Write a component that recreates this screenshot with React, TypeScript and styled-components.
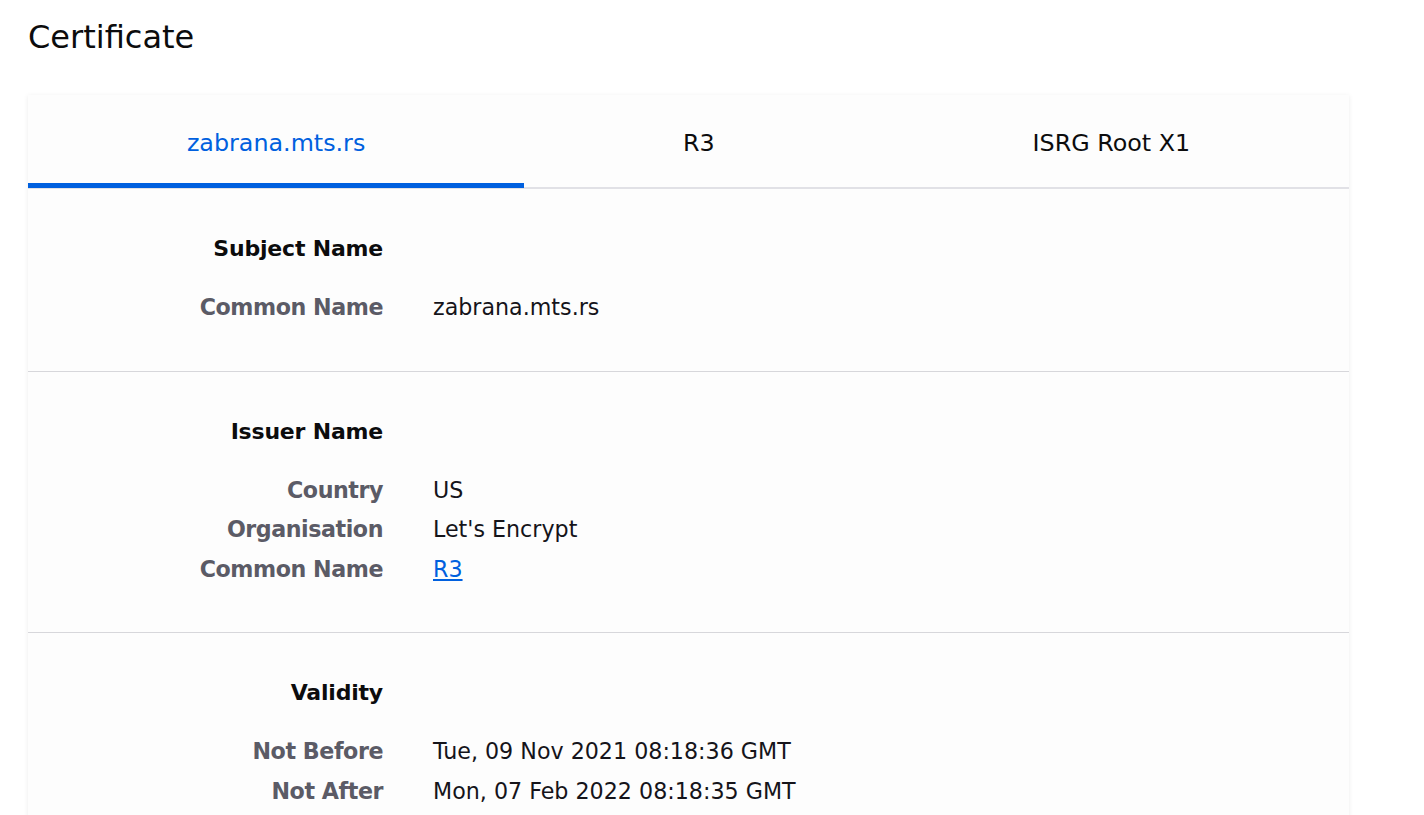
import React, { useState } from 'react';
import styled, { createGlobalStyle } from 'styled-components';

const GlobalStyle = createGlobalStyle`
  html, body {
    margin: 0;
    padding: 0;
    background: #ffffff;
  }
  body {
    font-family: "DejaVu Sans", "Liberation Sans", sans-serif;
    color: #15141a;
  }
`;

interface Field {
  label: string;
  value: string;
  link?: boolean;
}

interface Section {
  title: string;
  fields: Field[];
}

const sections: Section[] = [
  {
    title: 'Subject Name',
    fields: [{ label: 'Common Name', value: 'zabrana.mts.rs' }],
  },
  {
    title: 'Issuer Name',
    fields: [
      { label: 'Country', value: 'US' },
      { label: 'Organisation', value: "Let's Encrypt" },
      { label: 'Common Name', value: 'R3', link: true },
    ],
  },
  {
    title: 'Validity',
    fields: [
      { label: 'Not Before', value: 'Tue, 09 Nov 2021 08:18:36 GMT' },
      { label: 'Not After', value: 'Mon, 07 Feb 2022 08:18:35 GMT' },
    ],
  },
];

const tabs = ['zabrana.mts.rs', 'R3', 'ISRG Root X1'];

const App: React.FC = () => {
  const [active, setActive] = useState(0);

  return (
    <Page>
      <GlobalStyle />
      <Title>Certificate</Title>
      <Card>
        <TabList>
          {tabs.map((t, i) => (
            <Tab key={t} $active={i === active} onClick={() => setActive(i)}>
              {t}
            </Tab>
          ))}
        </TabList>
        {sections.map((s) => (
          <SectionBox key={s.title}>
            <Heading>{s.title}</Heading>
            <Fields>
              {s.fields.map((f) => (
                <React.Fragment key={f.label}>
                  <Label>{f.label}</Label>
                  <Value>{f.link ? <Link href="#">{f.value}</Link> : f.value}</Value>
                </React.Fragment>
              ))}
            </Fields>
          </SectionBox>
        ))}
      </Card>
    </Page>
  );
};

const Page = styled.div`
  padding: 19px 0 0 28px;
  height: 815px;
  box-sizing: border-box;
  overflow: hidden;
`;

const Title = styled.h1`
  margin: 0 0 39px;
  font-size: 32px;
  line-height: 37px;
  font-weight: 400;
  color: #0c0c0d;
`;

const Card = styled.div`
  width: 1321px;
  background: #fdfdfd;
  box-shadow: 0 1px 5px rgba(12, 12, 13, 0.08);
`;

const TabList = styled.div`
  display: flex;
  border-bottom: 2px solid #e1e1e6;
`;

const Tab = styled.button<{ $active: boolean }>`
  flex: 1 1 auto;
  background: none;
  border: none;
  border-bottom: 5px solid ${(p) => (p.$active ? '#0060df' : 'transparent')};
  margin-bottom: -1px;
  padding: 34px 0 26px;
  font-family: inherit;
  font-size: 23.8px;
  line-height: 28px;
  color: ${(p) => (p.$active ? '#0060df' : '#0c0c0d')};
  cursor: pointer;
`;

const SectionBox = styled.div`
  padding: 46px 0 43px;
  border-bottom: 1px solid #d7d7db;
`;

const Heading = styled.div`
  width: 355px;
  text-align: right;
  font-size: 22px;
  line-height: 28px;
  font-weight: 700;
  letter-spacing: -0.2px;
  color: #0c0c0d;
  margin-bottom: 25px;
`;

const Fields = styled.div`
  display: grid;
  grid-template-columns: 355px 1fr;
  column-gap: 50px;
  font-size: 22.2px;
  line-height: 39.5px;
`;

const Label = styled.div`
  text-align: right;
  font-weight: 700;
  letter-spacing: -0.45px;
  color: #5b5b66;
`;

const Value = styled.div`
  color: #15141a;
`;

const Link = styled.a`
  color: #0060df;
  text-decoration: underline;
`;

export default App;
